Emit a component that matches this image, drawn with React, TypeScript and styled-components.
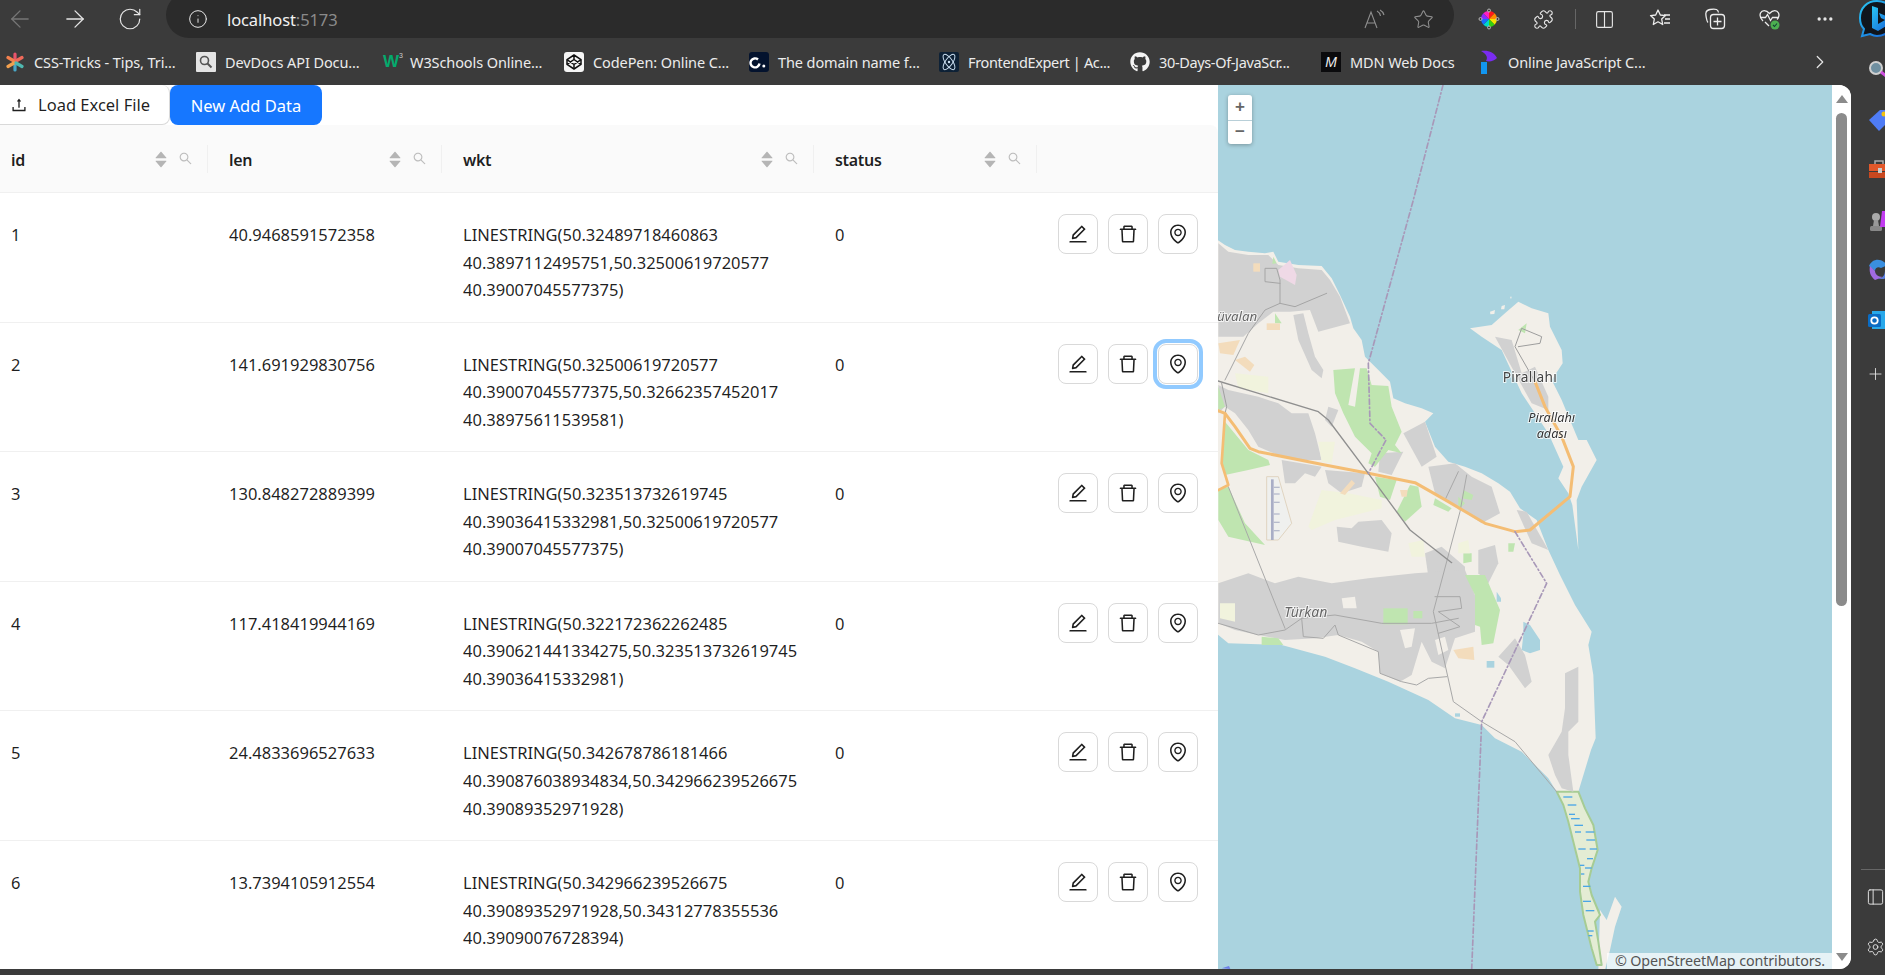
import React from "react";
import styled, { createGlobalStyle } from "styled-components";
import { AiOutlineEdit, AiOutlineDelete, AiOutlineEnvironment, AiOutlineSearch, AiOutlineUpload, AiFillCaretUp, AiFillCaretDown } from "react-icons/ai";
import { FaGithub } from "react-icons/fa";
import { ArrowLeft, ArrowRight, RotateCw, Info, Star, Puzzle, Columns2, Ellipsis, ChevronRight, Plus, Settings, PanelLeft } from "lucide-react";

const Global = createGlobalStyle`
  html, body { margin: 0; padding: 0; background: #333; overflow: hidden; }
  * { box-sizing: border-box; }
  body { font-family: "Noto Sans", "Liberation Sans", sans-serif; }
`;

const Shell = styled.div`
  width: 1885px; height: 975px; background: #3b3b3b; overflow: hidden;
  display: flex; flex-direction: column;
`;
const TopBar = styled.div`
  height: 38px; flex: none; display: flex; align-items: center; padding-left: 9px; color: #e6e6e6;
  overflow: hidden;
`;
const NavIcon = styled.span<{ $dim?: boolean }>`
  width: 22px; height: 22px; margin-right: 33px; display: flex; align-items: center; justify-content: center;
  color: ${p => (p.$dim ? "#777" : "#e6e6e6")};
  & > svg { flex: none; }
  &:nth-of-type(3) { margin-right: 25px; }
`;
const AddressBar = styled.div`
  width: 1288px; height: 46px; margin-top: -8px; border-radius: 23px; background: #2b2b2b; flex: none;
  display: flex; align-items: center; padding: 8px 20px 0 22px; font-size: 16.5px; letter-spacing: -0.1px;
`;
const AddrInfo = styled.span`
  width: 20px; height: 20px; margin-right: 19px; display: flex; color: #e6e6e6;
`;
const Host = styled.span` color: #f2f2f2; `;
const Port = styled.span` color: #8a8a8a; `;
const AddrRight = styled.div`
  margin-left: auto; display: flex; align-items: center; gap: 28px; color: #8f8f8f;
`;
const ReadAloud = styled.svg` width: 22px; height: 22px; display: block; `;
const ToolSlot = styled.span`
  width: 55px; flex: none; height: 24px; display: flex; align-items: center; justify-content: center; color: #e6e6e6;
`;
const ToolGap = styled.span` width: 7px; flex: none; `;
const ToolSep = styled.span`
  width: 1px; height: 20px; background: #666; flex: none; margin: 0 1px 0 4px;
`;
const BingSlot = styled.span` margin-left: 7px; width: 40px; height: 38px; flex: none; display: block; `;

const BookmarkBar = styled.div`
  height: 47px; flex: none; display: flex; align-items: center; padding-left: 5px; overflow: hidden;
`;
const Bookmark = styled.div<{ $w: number; $tight?: boolean }>`
  width: ${p => p.$w}px; flex: none; display: flex; align-items: center; gap: 9px;
  color: #ececec; font-size: 14.5px; letter-spacing: ${p => (p.$tight ? "-0.35px" : "-0.1px")}; white-space: nowrap;
`;
const BookmarkIcon = styled.span`
  width: 20px; height: 20px; flex: none; display: flex; align-items: center; justify-content: center;
`;
const BookmarkEnd = styled.span`
  margin-left: auto; margin-right: 37px; color: #e6e6e6; display: flex;
`;
const RailSearch = styled.svg`
  display: block; width: 24px; height: 24px; flex: none; margin-right: -7px; margin-top: 18px;
`;
const WThree = styled.span`
  color: #04aa6d; font: 700 17px "Liberation Sans", sans-serif; line-height: 1; position: relative;
  & > sup { font-size: 7px; color: #ccc; position: absolute; top: -1px; left: 16px; font-weight: 400; }
`;
const MdnMark = styled.span`
  width: 20px; height: 20px; background: #0b0b0d; color: #eee; display: flex; align-items: center; justify-content: center;
  font: italic 400 14px "Liberation Sans", sans-serif;
`;

const Body = styled.div`
  height: 884px; flex: none; display: flex;
`;
const Page = styled.div`
  width: 1851px; flex: none; background: #fff; display: flex; overflow: hidden;
  border-radius: 0 12px 12px 0;
`;
const TablePane = styled.div`
  width: 1218px; flex: none; overflow: hidden; color: rgba(0,0,0,.88);
`;
const Actions = styled.div` height: 40px; display: flex; `;
const UploadButton = styled.button`
  width: 170px; height: 40px; background: #fff; border: 1px solid #d9d9d9; border-left: 0; border-top: 0; border-radius: 0 8px 8px 0;
  display: flex; align-items: center; gap: 10px; padding: 0 0 0 10px; color: rgba(0,0,0,.88);
  font: 400 16.5px "Noto Sans", sans-serif;
`;
const PrimaryButton = styled.button`
  width: 152px; height: 40px; background: #1677ff; border: 0; border-radius: 8px;
  color: #fff; font: 400 16.5px "Noto Sans", sans-serif; padding: 0;
`;
const Table = styled.table`
  width: 1218px; table-layout: fixed; border-collapse: separate; border-spacing: 0;
  font-size: 16.5px;
`;
const HeadCell = styled.th<{ $first?: boolean; $last?: boolean }>`
  height: 68px; background: #fafafa; border-bottom: 1px solid #f0f0f0; position: relative;
  text-align: left; font-weight: 600; font-size: 16px; letter-spacing: -0.3px; padding: 0 15px 0 ${p => (p.$first ? 11 : 21)}px;
  ${p => (p.$last ? "border-top-right-radius: 8px;" : "")}
  ${p => (p.$last ? "" : `&::after { content: ""; position: absolute; right: 0; top: 20px; height: 28px; width: 1px; background: #f0f0f0; }`)}
`;
const HeadInner = styled.div` display: flex; align-items: center; `;
const HeadTitle = styled.span` flex: 1; margin-top: 2px; `;
const Sorter = styled.span`
  display: flex; flex-direction: column; color: #b5b5b5; font-size: 16px; margin-right: 9px; margin-top: 1px;
  & > svg:first-child { margin-bottom: -5px; }
  & > svg:last-child { margin-top: -2px; }
`;
const FilterIcon = styled.span` display: flex; color: #bdbdbd; font-size: 15px; margin-top: -1px; `;
const Cell = styled.td<{ $first?: boolean }>`
  vertical-align: top; border-bottom: 1px solid #f0f0f0; line-height: 27.6px;
  padding: 28px ${p => (p.$first ? 11 : 21)}px 17.8px ${p => (p.$first ? 11 : 21)}px;
  height: 129.6px; word-break: normal;
`;
const ActionCell = styled.td`
  vertical-align: top; border-bottom: 1px solid #f0f0f0; padding: 21px 0 0 21px;
`;
const RowButtons = styled.div` display: flex; gap: 10px; `;
const IconButton = styled.button<{ $focused?: boolean }>`
  width: 40px; height: 40px; border: 1px solid #d9d9d9; border-radius: 8px; background: #fff; padding: 0;
  display: flex; align-items: center; justify-content: center; font-size: 22px; color: rgba(0,0,0,.88);
  ${p => (p.$focused ? "outline: 4px solid #91caff; outline-offset: 1px;" : "")}
`;

const MapPane = styled.div`
  width: 614px; height: 884px; flex: none; position: relative; overflow: hidden; background: #aad3df;
`;
const MapCanvas = styled.svg`
  display: block; width: 614px; height: 884px; filter: blur(0.5px);
`;
const ZoomBox = styled.div`
  position: absolute; left: 10px; top: 10px; width: 24px; height: 49px; background: #fff; border-radius: 3px;
  box-shadow: 0 1px 4px rgba(0,0,0,.3); display: flex; flex-direction: column;
`;
const ZoomKey = styled.div`
  height: 24.5px; display: flex; align-items: center; justify-content: center; color: #666;
  font: 700 17px "Liberation Sans", sans-serif;
  & + & { border-top: 1px solid #b8cfd8; }
`;
const Attribution = styled.div`
  position: absolute; right: 0; bottom: 0; height: 16px; padding: 0 7px 0 8px; background: rgba(255,255,255,.7);
  color: #555; font-size: 14.3px; line-height: 16px; white-space: nowrap; letter-spacing: -0.1px;
`;
const Scrollbar = styled.div`
  width: 19px; flex: none; background: #fff; display: flex; flex-direction: column; align-items: center;
`;
const ScrollUp = styled.span`
  margin-top: 10px; width: 0; height: 0; border-left: 6px solid transparent; border-right: 6px solid transparent; border-bottom: 8px solid #8b8b8b;
`;
const ScrollThumb = styled.div`
  width: 11px; height: 493px; background: #8b8b8b; border-radius: 6px; margin-top: 10px;
`;
const ScrollDown = styled.span`
  margin-top: auto; margin-bottom: 8px; width: 0; height: 0; border-left: 6px solid transparent; border-right: 6px solid transparent; border-top: 8px solid #8b8b8b;
`;
const Rail = styled.div`
  width: 34px; flex: none; display: flex; flex-direction: column; overflow: hidden; padding-left: 17px;
`;
const RailIcon = styled.svg<{ $top: number }>`
  display: block; width: 24px; height: 24px; flex: none; margin-top: ${p => p.$top}px;
`;
const RailAdd = styled.span`
  margin: 30px 0 0 -2px; color: #e6e6e6; display: flex; flex: none;
`;
const RailLine = styled.span`
  height: 1px; width: 24px; background: #666; margin-top: 483px; margin-left: -7px; flex: none;
`;
const RailTool = styled.span<{ $top: number }>`
  margin-top: ${p => p.$top}px; color: #e6e6e6; display: flex; margin-left: -2px; flex: none;
`;

const columns = ["id", "len", "wkt", "status"];
const widths = [208, 234, 372, 223, 181];
const rows = [
  ["1", "40.9468591572358", "LINESTRING(50.32489718460863 40.3897112495751,50.32500619720577 40.39007045577375)"],
  ["2", "141.691929830756", "LINESTRING(50.32500619720577 40.39007045577375,50.32662357452017 40.38975611539581)"],
  ["3", "130.848272889399", "LINESTRING(50.323513732619745 40.39036415332981,50.32500619720577 40.39007045577375)"],
  ["4", "117.418419944169", "LINESTRING(50.322172362262485 40.390621441334275,50.323513732619745 40.39036415332981)"],
  ["5", "24.4833696527633", "LINESTRING(50.342678786181466 40.390876038934834,50.342966239526675 40.39089352971928)"],
  ["6", "13.7394105912554", "LINESTRING(50.342966239526675 40.39089352971928,50.34312778355536 40.39090076728394)"],
];

type Poly = string;
const gray: Poly[] = [
  "10,130 40,155 100,165 160,165 190,195 250,205 320,210 345,240 375,290 405,370 310,395 285,330 225,335 175,335 130,370 85,410 10,410",
  "235,345 265,340 280,400 300,470 325,510 320,535 290,510 250,420",
  "10,555 40,570 130,590 190,610 230,640 280,640 300,700 320,780 250,780 200,770 130,740 100,690 60,640 30,620 10,640",
  "340,620 370,630 350,680 330,660",
  "200,780 320,800 300,830 270,820 240,850 210,850",
  "330,810 450,820 440,860 380,880 340,850",
  "565,700 630,665 665,770 620,800",
  "495,760 565,755 530,825 490,815",
  "640,800 720,790 770,830 830,860 855,940 800,970 740,930 660,880",
  "905,930 935,935 1000,1050 950,1030",
  "365,980 410,985 430,965 500,960 530,1000 520,1055 440,1040 370,1025",
  "790,1050 840,1035 850,1090 820,1150 790,1120",
  "630,1060 680,1040 750,1100 750,1130 640,1130",
  "10,1150 100,1120 180,1150 250,1130 350,1150 460,1135 600,1120 750,1110 780,1185 780,1295 720,1315 690,1405 650,1385 620,1325 590,1425 555,1445 495,1420 490,1355 440,1325 370,1305 300,1315 210,1320 130,1305 60,1290 10,1270",
  "850,1370 900,1315 930,1365 950,1445 930,1465 880,1395",
  "1050,1420 1090,1400 1090,1565 1060,1595 1060,1665 1075,1775 1040,1765 1020,1725 1000,1665 1040,1595 1050,1525",
  "840,410 890,420 920,520 960,500 1000,590 1000,630 950,610 900,520",
];
const greens: Poly[] = [
  "355,510 420,505 400,615 420,620 435,505 455,505 470,555 520,558 530,620 560,695 540,735 560,760 520,750 480,800 460,790 470,760 420,710 385,640 360,580",
  "30,665 100,750 160,780 165,795 100,810 30,825 20,780",
  "10,560 30,620 10,630",
  "10,870 40,860 90,970 150,1035 40,1010 10,960",
  "480,830 545,840 525,900 495,890",
  "585,855 610,860 620,920 570,965 545,935",
  "660,895 710,925 700,935 655,915",
  "745,870 775,885 770,900 740,895",
  "880,1030 900,1030 895,1055 880,1055",
  "745,1060 770,1060 770,1085 745,1090",
  "505,1225 578,1225 578,1273 505,1273",
  "595,1233 622,1233 622,1255 595,1255",
  "750,1125 810,1125 855,1230 835,1330 800,1335 795,1280 780,1275 780,1185",
  "140,1310 190,1315 205,1335 140,1335",
  "175,170 185,190 172,192",
  "180,340 200,370 180,370",
  "730,890 750,910 730,930",
  "910,390 935,370 930,400",
];
const pale: Poly[] = [
  "280,980 320,870 400,880 500,900 500,925 360,960 290,990",
  "60,520 160,530 160,580 70,565",
  "15,1210 60,1210 60,1265 15,1255",
  "310,725 360,725 350,790 320,785",
  "730,1030 760,1020 765,1060 730,1060",
  "580,1030 625,1020 630,1070 590,1070",
];
const bare: Poly[] = [
  "555,1290 600,1285 590,1340 570,1345",
  "380,1195 420,1190 425,1225 385,1225",
  "660,1320 690,1310 700,1350 670,1365",
];
const orange: Poly[] = [
  "60,480 90,470 118,495 105,515",
  "10,430 75,420 55,465 15,460",
  "375,880 410,840 420,850 390,885",
  "155,370 195,370 195,390 155,390",
  "115,190 135,190 135,215 115,215",
  "715,1350 775,1340 778,1380 730,1375",
  "555,870 578,870 575,890 560,890",
];
const water: Poly[] = [
  "925,1265 945,1275 975,1320 975,1350 945,1360 920,1350 925,1305",
  "815,1383 838,1383 838,1403 815,1403",
  "845,1175 858,1195 858,1205 845,1205",
  "720,1540 735,1540 735,1550 720,1550",
];
const dashes: [number, number, number, number][] = [
  [1045, 666, 1072, 666], [1058, 690, 1084, 690], [1062, 718, 1080, 718], [1068, 731, 1094, 731], [1078, 751, 1104, 751],
  [1080, 771, 1098, 771], [1112, 771, 1138, 771], [1114, 795, 1140, 795], [1090, 822, 1112, 822], [1124, 822, 1146, 822],
  [1116, 851, 1134, 851], [1110, 879, 1130, 879], [1104, 934, 1126, 934], [1104, 979, 1128, 979], [1112, 1007, 1138, 1007],
  [1118, 1068, 1136, 1068], [1120, 1082, 1132, 1082], [1095, 871, 1108, 871], [1098, 897, 1108, 897],
];

const Line = ({ p, c, w, d }: { p: string; c: string; w: number; d?: string }) => (
  <polyline points={p} fill="none" stroke={c} strokeWidth={w} strokeLinejoin="round" strokeLinecap="round" strokeDasharray={d} />
);
const labelProps = { fontFamily: "'Noto Sans', sans-serif", paintOrder: "stroke", stroke: "#fff", strokeOpacity: 0.75, strokeWidth: 6 } as const;

const MapDrawing = () => (
  <MapCanvas viewBox="9 -345 1842 2652">
    <rect x="9" y="-345" width="1842" height="2652" fill="#aad3df" />
    <polygon fill="#f2efe9" points="0,115 30,135 60,150 100,155 150,160 175,155 190,185 250,195 320,198 350,235 375,285 405,350 415,385 440,420 450,470 490,510 525,545 535,595 570,610 620,625 655,640 630,665 660,740 700,785 750,800 800,820 850,850 885,875 915,925 965,960 1000,1050 1035,1125 1080,1215 1130,1295 1120,1335 1135,1425 1142,1615 1128,1650 1090,1775 1025,1775 1000,1735 920,1655 840,1615 800,1575 720,1555 640,1500 520,1445 420,1405 330,1370 200,1335 40,1330 10,1305 0,1300" />
    <polygon fill="#f2efe9" points="765,385 830,375 875,335 910,305 950,325 1000,340 1005,380 1040,450 1043,490 1010,540 1040,600 1090,720 1115,720 1145,780 1100,860 1085,900 1090,1050 1072,915 1060,880 1030,835 1045,800 1000,700 920,580 860,450 800,410" />
    <polygon fill="#f2efe9" points="1155,2130 1175,2160 1200,2090 1220,2120 1200,2180 1185,2250 1170,2310 1150,2310" />
    {["825,335 840,330 838,342 826,343", "860,318 870,315 868,328 858,328", "885,290 890,290 888,298"].map(p => <polygon key={p} points={p} fill="#f2efe9" />)}
    <polygon fill="#e4ecd4" stroke="#a6cc94" strokeWidth="6" strokeLinejoin="round" points="1025,1775 1045,1815 1060,1865 1075,1925 1095,2005 1095,2075 1105,2145 1130,2245 1145,2295 1160,2295 1150,2225 1140,2165 1155,2145 1130,2085 1120,2045 1130,2005 1148,1950 1135,1875 1110,1825 1090,1775" />
    {gray.map(p => <polygon key={p} points={p} fill="#d1d1d1" />)}
    {bare.map(p => <polygon key={p} points={p} fill="#f2efe9" />)}
    {greens.map(p => <polygon key={p} points={p} fill="#bfe5b0" />)}
    {pale.map(p => <polygon key={p} points={p} fill="#f1f3dd" />)}
    {orange.map(p => <polygon key={p} points={p} fill="#f3dcbc" />)}
    {water.map(p => <polygon key={p} points={p} fill="#aad3df" />)}
    <polygon points="190,210 225,180 245,225 240,255 195,230" fill="#efd9e6" />
    <polygon points="155,830 190,830 230,970 190,1020 155,1020" fill="#eff0ee" stroke="#e0d4c0" strokeWidth="3" />
    <rect x="168" y="838" width="8" height="182" fill="#a9aec6" />
    {[860, 880, 905, 940, 965, 990].map(y => <rect key={y} x="176" y={y} width="18" height="4" fill="#b6bbcc" />)}
    <Line p="30,540 100,400 150,330 195,310 195,240 185,205 150,205 150,245 195,250" c="#a5a5a5" w={3} />
    <Line p="195,310 240,320 335,280" c="#a5a5a5" w={3} />
    <Line p="20,550 35,620 30,640" c="#a0a0a0" w={3} />
    <Line p="40,860 210,1285" c="#a8a8a8" w={3} />
    <Line p="730,815 690,900" c="#a8a8a8" w={3} />
    <Line p="755,825 735,935 655,1235 715,1505 800,1565 900,1625 1025,1775" c="#a8a8a8" w={3} />
    <Line p="10,1270 130,1305 210,1290 260,1255 360,1245 500,1270 650,1270 730,1255" c="#a8a8a8" w={3} />
    <Line p="260,1255 265,1310 325,1315 360,1275 370,1305 490,1355 495,1420 560,1445 605,1455 640,1435 695,1430" c="#a8a8a8" w={3} />
    <Line p="660,1190 735,1190 740,1225 670,1235 735,1280 670,1300" c="#a8a8a8" w={3} />
    <Line p="960,545 900,440 920,385 980,410 975,430 910,440" c="#9d9d9d" w={3} />
    <Line p="9,632 30,640 60,680 105,745 130,755 330,795 460,820 600,848 700,905 810,970 900,995 945,990 1065,890 1075,800 1040,710 990,620 960,545" c="#f4bd74" w={9} />
    <Line p="30,640 20,790 40,855 10,870" c="#f4bd74" w={8} />
    <Line p="9,543 310,635 340,660 460,820 585,990 710,1088" c="#8f8f8f" w={4} />
    <Line p="684,-345 595,0 460,490 465,670 513,720 460,820" c="#a898b8" w={5} d="16 8 4 8" />
    <Line p="900,995 995,1150 800,1565 770,2310" c="#a898b8" w={5} d="16 8 4 8" />
    {dashes.map(d => <line key={d.join()} x1={d[0]} y1={d[1] + 1125} x2={d[2]} y2={d[3] + 1125} stroke="#4aa6e6" strokeWidth="4" />)}
    <polygon points="20,2305 42,2298 46,2307" fill="#6d7fe8" />
    <text x="863" y="545" fontSize="41" fill="#444" letterSpacing="1" {...labelProps}>Pirallahı</text>
    <text x="940" y="667" fontSize="38" fill="#333" fontStyle="italic" {...labelProps}>Pirallahı</text>
    <text x="965" y="714" fontSize="38" fill="#333" fontStyle="italic" {...labelProps}>adası</text>
    <text x="208" y="1252" fontSize="42" fill="#666" fontStyle="italic" {...labelProps}>Türkan</text>
    <text x="6" y="362" fontSize="40" fill="#666" fontStyle="italic" {...labelProps}>üvalan</text>
  </MapCanvas>
);

const CssTricksLogo = () => (
  <svg width="18" height="20" viewBox="0 0 18 20">
    <g strokeWidth="3.2" strokeLinecap="round" fill="none">
      <path d="M9 2v7" stroke="#e9546b" /><path d="M9 11v7" stroke="#49a6c6" />
      <path d="M2 5.5l6 3.5" stroke="#f2804e" /><path d="M16 5.5l-6 3.5" stroke="#f06a5a" />
      <path d="M2 14.5l6-3.5" stroke="#f2a04e" /><path d="M16 14.5l-6-3.5" stroke="#4fb8b0" />
    </g>
  </svg>
);
const DevDocsLogo = () => (
  <svg width="20" height="20" viewBox="0 0 20 20">
    <rect width="20" height="20" rx="1" fill="#e4e4e4" />
    <circle cx="8.5" cy="8.5" r="4" fill="none" stroke="#555" strokeWidth="1.6" />
    <path d="M11.5 11.5l4 4" stroke="#555" strokeWidth="2" />
  </svg>
);
const CodePenLogo = () => (
  <svg width="20" height="20" viewBox="0 0 20 20">
    <rect width="20" height="20" rx="3" fill="#f5f5f5" />
    <g fill="none" stroke="#111" strokeWidth="1.5" strokeLinejoin="round">
      <path d="M10 3l7 4.6v4.8L10 17l-7-4.6V7.6z" />
      <path d="M10 3v4.5M10 12.5V17M3 7.6l7 4.9 7-4.9M3 12.4l7-4.9 7 4.9" />
    </g>
  </svg>
);
const DomainLogo = () => (
  <svg width="20" height="20" viewBox="0 0 20 20">
    <rect width="20" height="20" rx="3" fill="#04132e" />
    <path d="M9.5 4a4.5 4.5 0 1 0 1.5 4" fill="none" stroke="#fff" strokeWidth="2.4" transform="translate(-.5 3.5)" />
    <circle cx="14.8" cy="14" r="1.5" fill="#fff" />
  </svg>
);
const FrontendLogo = () => (
  <svg width="20" height="20" viewBox="0 0 20 20">
    <rect width="20" height="20" rx="2" fill="#0d2136" />
    <g fill="none" stroke="#cfe3f5" strokeWidth="1">
      <ellipse cx="10" cy="10" rx="3.6" ry="9" transform="rotate(35 10 10)" />
      <ellipse cx="10" cy="10" rx="3.6" ry="9" transform="rotate(-35 10 10)" />
    </g>
    <circle cx="10" cy="10" r="1.2" fill="#cfe3f5" />
  </svg>
);
const JsLogo = () => (
  <svg width="18" height="26" viewBox="0 0 18 26">
    <path d="M1 2c7-1 13 1 16 7-3 3-7 4-11 3 2-3 1-7-5-10z" fill="#7a2cf0" />
    <path d="M1 13h6v12H1z" fill="#1296ef" />
  </svg>
);

const ColorWheel = () => (
  <svg width="22" height="22" viewBox="0 0 22 22">
    {["#ff1a1a", "#ff8a00", "#f4e300", "#32d010", "#00d8c8", "#1a6cff", "#8a2bff", "#ff20c0"].map((c, i) => (
      <path key={c} d="M11 11L11 3A8 8 0 0 1 16.66 5.34Z" fill={c} transform={`rotate(${i * 45} 11 11)`} />
    ))}
    <g fill="#3b3b3b" stroke="#cfcfcf" strokeWidth=".8">
      <circle cx="11" cy="2.5" r="1.5" /><circle cx="11" cy="19.5" r="1.5" /><circle cx="2.5" cy="11" r="1.5" /><circle cx="19.5" cy="11" r="1.5" />
    </g>
  </svg>
);
const FavIcon = () => (
  <svg width="22" height="22" viewBox="0 0 22 22" fill="none" stroke="#ededed" strokeWidth="1.3" strokeLinejoin="round">
    <path d="M9 2l2.3 5 5.2.6-3.8 3.5 1 5.4L9 13.8l-4.700 2.700 1-5.400L1.500 7.600l5.200-.6z" />
    <path d="M15 7h6M16 11h5M15 15h6" />
  </svg>
);
const CollectionIcon = () => (
  <svg width="22" height="22" viewBox="0 0 22 22" fill="none" stroke="#ededed" strokeWidth="1.300">
    <path d="M4 14.500C2.500 13 1.500 6 2 4.500 2.500 2.500 4 2 6 1.500c2-.4 5-.6 6.500 0 1.200.5 1.800 1.800 2 3" />
    <rect x="6.500" y="6.500" width="14" height="14" rx="3" />
    <path d="M13.500 9.500v8M9.500 13.500h8" />
  </svg>
);
const HealthIcon = () => (
  <svg width="24" height="24" viewBox="0 0 24 24" fill="none">
    <path d="M5 14C2 11 1.500 8.500 2.500 6c1.500-3 5.500-3.500 9 .5 3.500-4 7.500-3.500 9-.5 1 2.500.5 4.500-1.500 6.500" stroke="#ededed" strokeWidth="1.300" />
    <path d="M3 10.500h4.500l2-3 3 6 2-3H20M7 15l4 4" stroke="#ededed" strokeWidth="1.300" />
    <circle cx="17" cy="18" r="4.500" fill="#4caf50" />
    <path d="M15 18l1.500 1.500 2.500-3" stroke="#143" strokeWidth="1.100" />
  </svg>
);
const BingLogo = () => (
  <svg width="40" height="38" viewBox="0 0 40 38">
    <defs>
      <linearGradient id="bing" x1="0" y1="0" x2="1" y2="1">
        <stop offset="0" stopColor="#29c6f2" /><stop offset="1" stopColor="#1560d8" />
      </linearGradient>
    </defs>
    <path d="M18 1C8 1 1 8 1 18c0 5 2 9 4 11l-2 7 8-2c2 1 4 2 7 2 10 0 18-8 18-18S28 1 18 1z" fill="#10151c" stroke="url(#bing)" strokeWidth="2" />
    <path d="M13 6l6 2v16l7-4-4-2-2-5 12 5v5l-13 8-6-3z" fill="url(#bing)" />
  </svg>
);

export default function App() {
  return (
    <Shell>
      <Global />
      <TopBar>
        <NavIcon $dim><ArrowLeft size={28} strokeWidth={1.1} /></NavIcon>
        <NavIcon><ArrowRight size={28} strokeWidth={1.1} /></NavIcon>
        <NavIcon><RotateCw size={26} strokeWidth={1.1} /></NavIcon>
        <AddressBar>
          <AddrInfo><Info size={20} strokeWidth={1.2} /></AddrInfo>
          <Host>localhost</Host><Port>:5173</Port>
          <AddrRight>
            <ReadAloud viewBox="0 0 22 22" fill="none" stroke="#8f8f8f" strokeWidth="1.1">
              <path d="M2 20L8 4l6 16M4 15h8M14 3c2 1 3 2 3.500 5M17 2c2 1 3.500 3 4 5" />
            </ReadAloud>
            <Star size={21} strokeWidth={1.2} />
          </AddrRight>
        </AddressBar>
        <ToolGap />
        <ToolSlot><ColorWheel /></ToolSlot>
        <ToolSlot><Puzzle size={21} strokeWidth={1.3} /></ToolSlot>
        <ToolSep />
        <ToolSlot><Columns2 size={21} strokeWidth={1.3} /></ToolSlot>
        <ToolSlot><FavIcon /></ToolSlot>
        <ToolSlot><CollectionIcon /></ToolSlot>
        <ToolSlot><HealthIcon /></ToolSlot>
        <ToolSlot><Ellipsis size={20} strokeWidth={2} /></ToolSlot>
        <BingSlot><BingLogo /></BingSlot>
      </TopBar>
      <BookmarkBar>
        <Bookmark $w={191}><BookmarkIcon><CssTricksLogo /></BookmarkIcon>CSS-Tricks - Tips, Tri...</Bookmark>
        <Bookmark $w={185}><BookmarkIcon><DevDocsLogo /></BookmarkIcon>DevDocs API Docu...</Bookmark>
        <Bookmark $w={183}><BookmarkIcon><WThree>W<sup>3</sup></WThree></BookmarkIcon>W3Schools Online...</Bookmark>
        <Bookmark $w={185}><BookmarkIcon><CodePenLogo /></BookmarkIcon>CodePen: Online C...</Bookmark>
        <Bookmark $w={190}><BookmarkIcon><DomainLogo /></BookmarkIcon>The domain name f...</Bookmark>
        <Bookmark $w={191} $tight><BookmarkIcon><FrontendLogo /></BookmarkIcon>FrontendExpert | Ac...</Bookmark>
        <Bookmark $w={191} $tight><BookmarkIcon><FaGithub size={20} color="#f4f4f4" /></BookmarkIcon>30-Days-Of-JavaScr...</Bookmark>
        <Bookmark $w={158}><BookmarkIcon><MdnMark>M</MdnMark></BookmarkIcon>MDN Web Docs</Bookmark>
        <Bookmark $w={200}><BookmarkIcon><JsLogo /></BookmarkIcon>Online JavaScript C...</Bookmark>
        <BookmarkEnd><ChevronRight size={22} strokeWidth={1.3} /></BookmarkEnd>
        <RailSearch viewBox="0 0 24 24">
          <circle cx="8" cy="9" r="6" fill="#6f8fa0" stroke="#cfcfcf" strokeWidth="2" /><path d="M13 13l8 6" stroke="#d050e0" strokeWidth="3" />
        </RailSearch>
      </BookmarkBar>
      <Body>
        <Page>
          <TablePane>
            <Actions>
              <UploadButton><AiOutlineUpload size={18} />Load Excel File</UploadButton>
              <PrimaryButton>New Add Data</PrimaryButton>
            </Actions>
            <Table>
              <colgroup>{widths.map((w, i) => <col key={i} width={w} />)}</colgroup>
              <thead>
                <tr>
                  {columns.map((c, i) => (
                    <HeadCell key={c} $first={i === 0}>
                      <HeadInner>
                        <HeadTitle>{c}</HeadTitle>
                        <Sorter><AiFillCaretUp /><AiFillCaretDown /></Sorter>
                        <FilterIcon><AiOutlineSearch /></FilterIcon>
                      </HeadInner>
                    </HeadCell>
                  ))}
                  <HeadCell $last />
                </tr>
              </thead>
              <tbody>
                {rows.map((r, i) => (
                  <tr key={r[0]}>
                    <Cell $first>{r[0]}</Cell>
                    <Cell>{r[1]}</Cell>
                    <Cell>{r[2]}</Cell>
                    <Cell>0</Cell>
                    <ActionCell>
                      <RowButtons>
                        <IconButton><AiOutlineEdit /></IconButton>
                        <IconButton><AiOutlineDelete /></IconButton>
                        <IconButton $focused={i === 1}><AiOutlineEnvironment /></IconButton>
                      </RowButtons>
                    </ActionCell>
                  </tr>
                ))}
              </tbody>
            </Table>
          </TablePane>
          <MapPane>
            <MapDrawing />
            <ZoomBox><ZoomKey>+</ZoomKey><ZoomKey>−</ZoomKey></ZoomBox>
            <Attribution>© OpenStreetMap contributors.</Attribution>
          </MapPane>
          <Scrollbar><ScrollUp /><ScrollThumb /><ScrollDown /></Scrollbar>
        </Page>
        <Rail>
          <RailIcon $top={23} viewBox="0 0 24 24">
            <path d="M1 12L12 2h10v10L11 23z" fill="#4f7cf5" /><circle cx="16" cy="6" r="2.500" fill="#f4c20d" />
          </RailIcon>
          <RailIcon $top={26} viewBox="0 0 24 24">
            <path d="M7 7V3h8v4" fill="none" stroke="#aaa" strokeWidth="1.500" /><rect x="1" y="6" width="22" height="7" fill="#e2582a" /><rect x="1" y="14" width="22" height="6" fill="#c9481f" /><rect x="10" y="10" width="4" height="5" fill="#ccc" />
          </RailIcon>
          <RailIcon $top={27} viewBox="0 0 24 24">
            <circle cx="8" cy="8" r="4" fill="#aaa" /><path d="M6 11h4l1 6H5z" fill="#999" /><rect x="2" y="17" width="12" height="5" rx="1.500" fill="#888" /><path d="M14 2h10v16H12z" fill="#c23cf0" />
          </RailIcon>
          <RailIcon $top={25} viewBox="0 0 24 24">
            <path d="M1 8c3-7 10-8 15-4l4 3-7 3c-3-2-6 0-6 3z" fill="#3a8fe0" /><path d="M2 8c-1 5 0 10 5 14l8-3c-5 0-8-3-8-6z" fill="#a06ae0" /><path d="M20 7v10c-1 4-6 5-11 3 5 1 8-2 8-8z" fill="#5a7fe0" />
          </RailIcon>
          <RailIcon $top={26} viewBox="0 0 24 24">
            <rect x="4" y="3" width="20" height="18" fill="#28a8ea" /><rect x="0" y="6" width="13" height="13" rx="1.500" fill="#0a6cc4" /><circle cx="6.500" cy="12.500" r="3.200" fill="none" stroke="#fff" strokeWidth="1.800" />
          </RailIcon>
          <RailAdd><Plus size={24} strokeWidth={1.1} /></RailAdd>
          <RailLine />
          <RailTool $top={16}><PanelLeft size={22} strokeWidth={1.2} /></RailTool>
          <RailTool $top={27}><Settings size={24} strokeWidth={1.2} /></RailTool>
        </Rail>
      </Body>
    </Shell>
  );
}
